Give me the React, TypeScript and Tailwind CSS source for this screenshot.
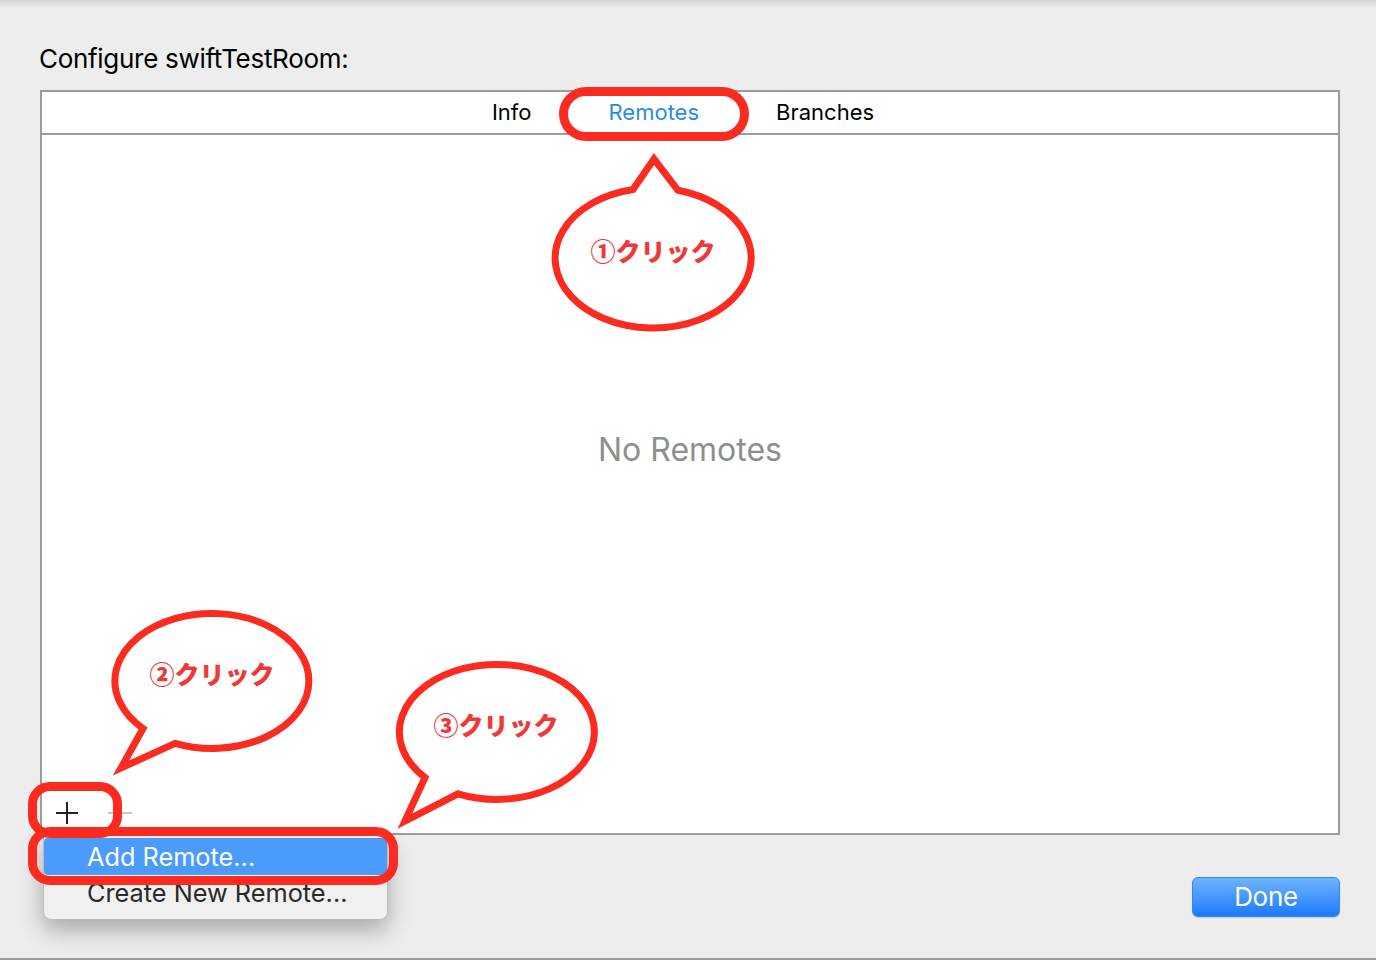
import React from 'react';

const RED = '#fc2b20';

function Bubble({ d, text, x, y }: { d: string; text: string; x: number; y: number }) {
  return (
    <g>
      <path d={d} fill="white" stroke={RED} strokeWidth={7} strokeLinejoin="miter" />
      <text
        x={x}
        y={y}
        textAnchor="middle"
        fill="#ef3838"
        fontSize={25}
        fontWeight={900}
        fontFamily="'Noto Sans CJK JP', sans-serif"
      >
        {text}
      </text>
    </g>
  );
}

function Callouts() {
  return (
    <svg className="absolute left-0 top-0 pointer-events-none" width={1376} height={960}>
      <Bubble
        d="M 678 190.3 A 98 70 0 1 1 633 189.5 L 654 159 Z"
        text="①クリック"
        x={653}
        y={261}
      />
      <Bubble
        d="M 175 743.4 A 97 67.5 0 1 0 143 728.5 L 121 768 Z"
        text="②クリック"
        x={212}
        y={684}
      />
      <Bubble
        d="M 458 793.8 A 97.5 67.5 0 1 0 425 777.5 L 405 821 Z"
        text="③クリック"
        x={496}
        y={735}
      />
    </svg>
  );
}

export default function App() {
  return (
    <div
      className="relative w-[1376px] h-[960px] overflow-hidden bg-[#ededed] text-black"
      style={{ fontFamily: "Inter, 'Noto Sans', sans-serif" }}
    >
      <div className="h-2 bg-gradient-to-b from-[#d3d3d3] to-[#ededed]" />

      <div className="flex flex-col pl-[40px] pr-[36px]">
        <div className="mt-[35px] -ml-px text-[26px] leading-[32px] tracking-[-0.3px]">
          Configure swiftTestRoom:
        </div>

        {/* panel */}
        <div className="mt-[15px] w-[1300px] h-[745px] flex flex-col border-2 border-[#9b9b9b] bg-white">
          <div className="h-[43px] border-b-2 border-[#9b9b9b] flex items-center justify-center gap-[77px] pr-[14px] text-[22px] leading-[41px]">
            <span>Info</span>
            <span className="text-[#2b8ce3]">Remotes</span>
            <span>Branches</span>
          </div>
          <div className="flex-1 flex flex-col">
            <div className="pt-[295px] text-center text-[32px] leading-[40px] text-[#8e8e8e]">
              No Remotes
            </div>
            <div className="mt-auto h-10 flex items-center pl-[14px]">
              <svg width={22} height={22} viewBox="0 0 22 22">
                <path d="M11 0 V22 M0 11 H22" stroke="#222" strokeWidth={2} />
              </svg>
              <svg className="ml-[30px]" width={24} height={22} viewBox="0 0 24 22">
                <path d="M0 11 H24" stroke="#b5b5b5" strokeWidth={1.5} />
              </svg>
            </div>
          </div>
        </div>

        <div className="w-[1300px] flex justify-end mt-[42px]">
          <button className="w-[148px] h-[40px] rounded-[6px] border border-[#2f87f3] bg-gradient-to-b from-[#6db2fd] to-[#187afb] text-white text-[26px] leading-[38px] tracking-[-0.3px] shadow-[0_1px_1px_rgba(0,0,0,0.15)]">
            Done
          </button>
        </div>
      </div>

      {/* bottom edge of window behind */}
      <div className="absolute left-0 bottom-0 w-full h-[2px] bg-[#9a9a9a]" />

      {/* popup menu */}
      <div className="absolute left-[43px] top-[835px] w-[345px] h-[85px] pt-[3px] bg-[#f0f0f0] rounded-b-[8px] border border-t-0 border-[#bdbdbd] shadow-[0_10px_24px_rgba(0,0,0,0.3)] text-[25.3px]">
        <div className="h-[37px] rounded-[4px] bg-[#4a9bfa] text-white pl-[43px] leading-[37px]">Add Remote...</div>
        <div className="h-[36px] pl-[43px] leading-[36px] text-[#2a2a2a]">Create New Remote...</div>
      </div>

      {/* red highlight boxes */}
      <div className="absolute left-[559px] top-[87px] w-[190px] h-[54px] rounded-[27px] border-[9px] border-[#fc2b20]" />
      <div className="absolute left-[28px] top-[782px] w-[94px] h-[56px] rounded-[22px] border-[9px] border-[#fc2b20]" />
      <div className="absolute left-[28px] top-[827px] w-[370px] h-[58px] rounded-[22px] border-[9px] border-[#fc2b20]" />

      <Callouts />
    </div>
  );
}
